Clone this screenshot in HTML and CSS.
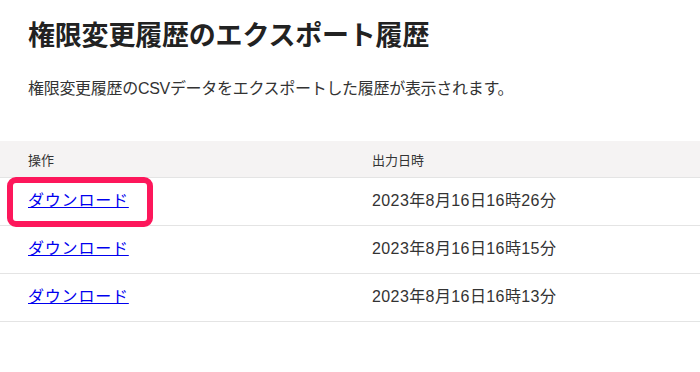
FILE: index.html
```html
<!DOCTYPE html>
<html lang="ja">
<head>
<meta charset="utf-8">
<link rel="stylesheet" href="styles.css">
</head>
<body>
<div class="intro">
  <h1 class="title">権限変更履歴のエクスポート履歴</h1>
  <p class="lead">権限変更履歴のCSVデータをエクスポートした履歴が表示されます。</p>
</div>
<table class="history">
  <colgroup><col class="col-op"><col></colgroup>
  <thead>
    <tr><th>操作</th><th>出力日時</th></tr>
  </thead>
  <tbody>
    <tr><td class="cell-mark"><a href="#">ダウンロード</a><span class="highlight"></span></td><td class="date">2023年8月16日16時26分</td></tr>
    <tr><td><a href="#">ダウンロード</a></td><td class="date">2023年8月16日16時15分</td></tr>
    <tr><td><a href="#">ダウンロード</a></td><td class="date">2023年8月16日16時13分</td></tr>
  </tbody>
</table>
</body>
</html>
```
FILE: styles.css
```css
html, body {
  margin: 0;
  padding: 0;
  background: #fff;
}
body {
  font-family: "Liberation Sans", "Noto Sans CJK JP", sans-serif;
  color: #333;
}
.intro {
  padding: 18px 28px 0;
}
.title {
  margin: 0;
  font-size: 27px;
  line-height: 36px;
  font-weight: 700;
  color: #222;
  letter-spacing: -0.2px;
}
.lead {
  margin: 23px 0 0;
  font-size: 16px;
  line-height: 24px;
  color: #333;
  letter-spacing: -0.3px;
}
.history {
  margin-top: 40px;
  width: 100%;
  border-collapse: collapse;
  table-layout: fixed;
}
.history .col-op {
  width: 344px;
}
.history th {
  background: #f5f3f3;
  height: 36px;
  padding: 0 0 0 28px;
  text-align: left;
  font-weight: 400;
  font-size: 13px;
  color: #333;
  border-bottom: 1px solid #e4e4e4;
}
.history td {
  height: 42px;
  padding: 0 0 5px 28px;
  font-size: 16px;
  color: #333;
  border-bottom: 1px solid #e4e4e4;
}
.history a {
  color: #0000ee;
  text-decoration: underline;
  letter-spacing: 0.8px;
}
.history .date {
  letter-spacing: 0.4px;
}
.cell-mark {
  position: relative;
}
.highlight {
  position: absolute;
  left: 7px;
  top: -1px;
  width: 146px;
  height: 50px;
  box-sizing: border-box;
  border: 6px solid #fd175b;
  border-radius: 9px;
  pointer-events: none;
}
```
